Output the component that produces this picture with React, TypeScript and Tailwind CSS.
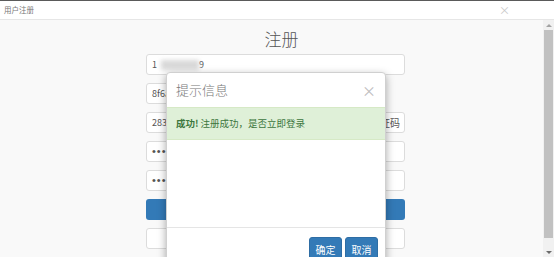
import React from 'react';

const font = { fontFamily: '"Noto Sans CJK SC", "Liberation Sans", sans-serif' };

const Field = ({ children, className = '' }: { children?: React.ReactNode; className?: string }) => (
  <div
    className={`h-[21px] flex items-center px-[5px] bg-white border border-[#dcdcdc] rounded-[3px] text-[9px] text-[#555] ${className}`}
  >
    {children}
  </div>
);

const Dots = () => (
  <span className="text-[11px] tracking-[1px] text-[#555]" style={{ fontFamily: '"Liberation Sans", sans-serif' }}>
    ••••••
  </span>
);

const Scrollbar = () => (
  <div className="w-[11px] bg-[#f1f1f1] flex flex-col items-center">
    <div className="h-[10px] flex items-center justify-center">
      <div className="w-0 h-0 border-l-[3px] border-r-[3px] border-b-[3px] border-l-transparent border-r-transparent border-b-[#a3a3a3]" />
    </div>
    <div className="w-[9px] h-[208px] bg-[#c1c1c1]" />
    <div className="flex-1" />
    <div className="h-[10px] flex items-center justify-center">
      <div className="w-0 h-0 border-l-[3px] border-r-[3px] border-t-[3px] border-l-transparent border-r-transparent border-t-[#6b6b6b]" />
    </div>
  </div>
);

export default function App() {
  return (
    <div className="relative w-[554px] h-[257px] overflow-hidden bg-white flex flex-col" style={font}>
      {/* window title bar */}
      <div className="h-[20px] shrink-0 border-t border-t-[#5a5a5a] border-b border-b-[#e6e6e6] flex items-center justify-between pl-[4px] pr-[44px]">
        <span className="text-[7.5px] text-[#777] leading-none">用户注册</span>
        <span className="text-[11px] text-[#c8c8c8] leading-none">×</span>
      </div>

      <div className="flex-1 flex min-h-0">
        <div className="flex-1 bg-[#f9f9f9] pl-[146px]">
          <div className="w-[259px] flex flex-col gap-[8px]">
            <h1 className="text-[17px] font-light text-[#555] text-center pl-[12px] pt-[11px] leading-[15px]">注册</h1>
            <Field>
              <span>1</span>
              <span className="ml-[4px] w-[38px] h-[10px] bg-[#d9d9d9] blur-[2px]" />
              <span>9</span>
            </Field>
            <Field className="w-[150px]">8f6a</Field>
            <Field className="justify-between pr-[4px]">
              <span>2831</span>
              <span className="text-[10px]">获取验证码</span>
            </Field>
            <Field>
              <Dots />
            </Field>
            <Field>
              <Dots />
            </Field>
            <div className="h-[21px] rounded-[3px] bg-[#337ab7] text-white text-[10px] flex items-center justify-center">注 册</div>
            <Field />
          </div>
        </div>
        <Scrollbar />
      </div>

      {/* dialog */}
      <div className="absolute left-[166px] top-[72px] w-[220px] h-[200px] bg-white rounded-[4px] border border-[#d0d0d0] shadow-[0_3px_9px_rgba(0,0,0,0.35)] flex flex-col">
        <div className="h-[34px] shrink-0 flex items-center justify-between pl-[9px] pr-[9px]">
          <span className="text-[13px] font-light text-[#777]">提示信息</span>
          <span className="text-[14px] text-[#bdbdbd] leading-none">×</span>
        </div>
        <div className="h-[33px] shrink-0 bg-[#dff0d8] border-y border-[#d6e9c6] flex items-center pl-[9px] text-[9.5px] text-[#3c763d]">
          <b className="font-bold mr-[2px]">成功!</b>
          <span>注册成功，是否立即登录</span>
        </div>
        <div className="h-[88px] shrink-0 border-b border-[#e5e5e5]" />
        <div className="flex justify-end gap-[3px] pr-[7px] pt-[9px]">
          <button className="w-[33px] h-[24px] rounded-[3px] bg-[#337ab7] border border-[#2e6da4] text-white text-[10px]">确定</button>
          <button className="w-[33px] h-[24px] rounded-[3px] bg-[#337ab7] border border-[#2e6da4] text-white text-[10px]">取消</button>
        </div>
      </div>
    </div>
  );
}
